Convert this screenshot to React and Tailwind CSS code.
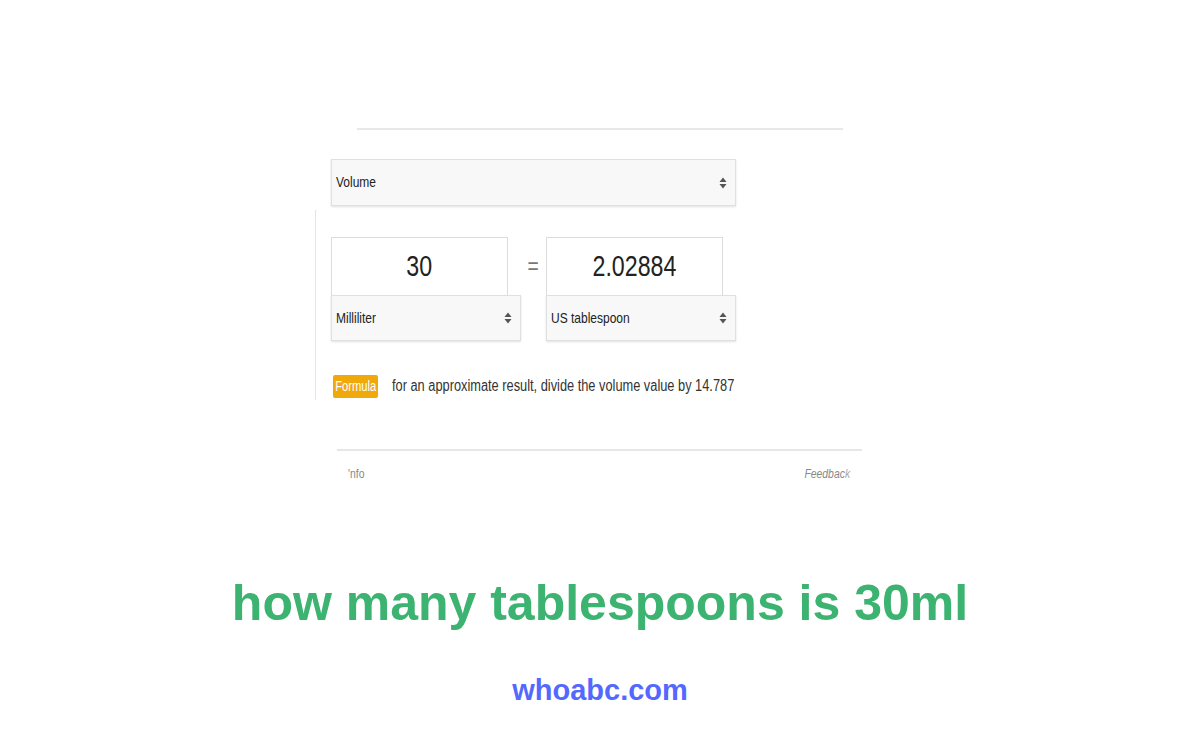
function Arrows() {
  return (
    <svg width="8" height="12" viewBox="0 0 8 12" className="shrink-0">
      <path d="M4 0.5 L7.5 5 L0.5 5 Z" fill="#555" />
      <path d="M4 11.5 L7.5 7 L0.5 7 Z" fill="#555" />
    </svg>
  )
}

// the source picture is squeezed sideways, so its text is narrowed with scale-x
function Narrow({ children, className = 'origin-left' }) {
  return <span className={`inline-block whitespace-nowrap scale-x-[0.8] ${className}`}>{children}</span>
}

function Select({ label, className }) {
  return (
    <div className={`flex items-center justify-between bg-[#f8f8f8] border border-[#e0e0e0] shadow-[0_1px_2px_rgba(0,0,0,0.12)] pl-[4px] pr-[8px] text-[15px] text-[#222] ${className}`}>
      <Narrow>{label}</Narrow>
      <Arrows />
    </div>
  )
}

function UnitColumn({ value, unit }) {
  return (
    <div className="flex flex-col w-[190px]">
      <div className="w-[177px] h-[58px] bg-white border border-[#dcdcdc] border-b-0 flex items-center justify-center text-[29px] text-[#222]">
        <Narrow className="origin-center">{value}</Narrow>
      </div>
      <Select label={unit} className="w-[190px] h-[46px]" />
    </div>
  )
}

export default function App() {
  return (
    <div className="w-full h-[750px] bg-white flex flex-col items-center" style={{ fontFamily: '"Liberation Sans", Arial, sans-serif' }}>
      <div className="w-[550px] mt-[125px] mr-[20px] flex flex-col">
        <div className="ml-[42px] mt-[3px] w-[486px] h-[2px] bg-[#e8e8e8]" />
        <Select label="Volume" className="ml-[16px] mt-[29px] w-[405px] h-[47px]" />
        <div className="mt-[4px] h-[190px] border-l border-[#e4e4e4] pl-[15px] pt-[27px] flex flex-col">
          <div className="flex items-start">
            <UnitColumn value="30" unit="Milliliter" />
            <div className="w-[25px] h-[58px] flex items-center justify-center text-[24px] text-[#777]">
              <Narrow className="origin-center">=</Narrow>
            </div>
            <UnitColumn value="2.02884" unit="US tablespoon" />
          </div>
          <div className="mt-[33px] ml-[2px] flex items-center">
            <span className="bg-[#f0a90a] text-white text-[14px] h-[23px] w-[45px] flex items-center justify-center rounded-[2px] overflow-hidden">
              <Narrow className="origin-center">Formula</Narrow>
            </span>
            <span className="ml-[14px] text-[16px] text-[#333]">
              <Narrow>for an approximate result, divide the volume value by 14.787</Narrow>
            </span>
          </div>
        </div>
        <div className="ml-[22px] mt-[49px] w-[525px] h-[2px] bg-[#e6e6e6]" />
        <div className="mt-[13px] ml-[33px] w-[502px] flex justify-between text-[13px] text-[#888]">
          <Narrow>'nfo</Narrow>
          <Narrow className="origin-right italic">Feedbac<span className="text-[#aaa]">k</span></Narrow>
        </div>
      </div>
      <h1 className="mt-[94px] text-[50px] font-bold text-[#3cb371] leading-none">how many tablespoons is 30ml</h1>
      <div className="mt-[48px] text-[29px] font-bold text-[#5468ff] leading-none">whoabc.com</div>
    </div>
  )
}
